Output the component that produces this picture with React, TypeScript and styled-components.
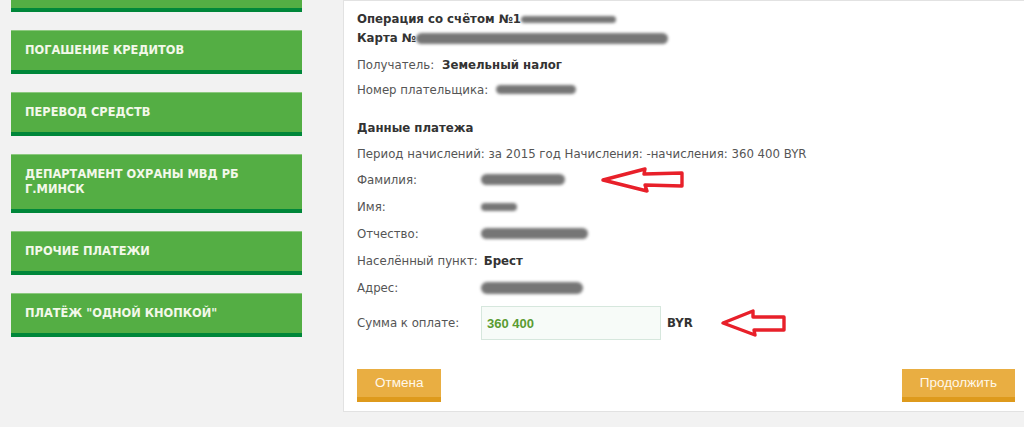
import styled, { createGlobalStyle } from "styled-components";

const GlobalStyle = createGlobalStyle`
  body {
    margin: 0;
    background: #f2f2f2;
    overflow: hidden;
    font-family: "DejaVu Sans", Verdana, sans-serif;
  }
`;

// first item is scrolled out of view, only its bottom edge shows
const menuItems = [
  "",
  "Погашение кредитов",
  "Перевод средств",
  "Департамент охраны МВД РБ г.Минск",
  "Прочие платежи",
  'Платёж "одной кнопкой"',
];

type ArrowProps = { w: number; h: number; points: string };

const Arrow = ({ w, h, points }: ArrowProps) => (
  <ArrowSvg width={w} height={h} viewBox={`0 0 ${w} ${h}`}>
    <polygon
      points={points}
      fill="none"
      stroke="#e8202a"
      strokeWidth="3.4"
      strokeLinejoin="round"
    />
  </ArrowSvg>
);

const Field = ({ label, children }: { label: string; children: React.ReactNode }) => (
  <FieldRow>
    <FieldLabel>{label}</FieldLabel>
    {children}
  </FieldRow>
);

export default function App() {
  return (
    <>
      <GlobalStyle />
      <Page>
        <Sidebar>
          {menuItems.map((item, i) => (
            <MenuButton key={i}>{item}</MenuButton>
          ))}
        </Sidebar>

        <Panel>
          <Title>
            <div>
              Операция со счётом №1<Redact $w={95} $h={7} />
            </div>
            <div>
              Карта №<Redact $w={252} $h={11} />
            </div>
          </Title>

          <InfoLine>
            <Label>Получатель:</Label>
            <Value>Земельный налог</Value>
          </InfoLine>
          <InfoLine>
            <Label>Номер плательщика:</Label>
            <Redact $w={80} $h={9} />
          </InfoLine>

          <SectionTitle>Данные платежа</SectionTitle>
          <InfoLine>
            <Label>Период начислений: за 2015 год Начисления: -начисления: 360 400 BYR</Label>
          </InfoLine>

          <Field label="Фамилия:">
            <Redact $w={84} $h={11} />
            <ArrowSlot $gap={36}>
              <Arrow w={84} h={26} points="2,13 44,2 43,7 81,6 81,19 44,18 46,24" />
            </ArrowSlot>
          </Field>
          <Field label="Имя:">
            <Redact $w={36} $h={8} />
          </Field>
          <Field label="Отчество:">
            <Redact $w={107} $h={11} />
          </Field>
          <Field label="Населённый пункт:">
            <Value>Брест</Value>
          </Field>
          <Field label="Адрес:">
            <Redact $w={102} $h={12} />
          </Field>

          <SumRow>
            <FieldLabel>Сумма к оплате:</FieldLabel>
            <AmountInput>360 400</AmountInput>
            <Currency>BYR</Currency>
            <ArrowSlot $gap={28}>
              <Arrow w={66} h={28} points="2,14 32,2 32,8 63,8 63,21 33,21 34,26" />
            </ArrowSlot>
          </SumRow>

          <Actions>
            <ActionButton>Отмена</ActionButton>
            <ActionButton>Продолжить</ActionButton>
          </Actions>
        </Panel>
      </Page>
    </>
  );
}

const Page = styled.div`
  display: flex;
  align-items: flex-start;
  gap: 41px;
  padding-left: 11px;
`;

const Sidebar = styled.nav`
  width: 291px;
  flex-shrink: 0;
  margin-top: -32px;
  display: flex;
  flex-direction: column;
  gap: 18px;
`;

const MenuButton = styled.div`
  box-sizing: border-box;
  min-height: 44px;
  padding: 12px 14px 12px;
  background: #54ae44;
  border-top: 1px solid #8cc97f;
  border-bottom: 4px solid #00873a;
  color: #f3f8ea;
  font-size: 11.4px;
  font-weight: bold;
  line-height: 15px;
  text-transform: uppercase;
`;

const Panel = styled.section`
  box-sizing: border-box;
  width: 686px;
  flex-shrink: 0;
  background: #fff;
  border: 1px solid #e2e2e2;
  padding: 9px 13px 9px;
  font-size: 11.75px;
  color: #555;
`;

const Title = styled.div`
  font-weight: bold;
  color: #333;
  line-height: 19px;
  margin-bottom: 4px;
`;

const Redact = styled.span<{ $w: number; $h: number }>`
  display: inline-block;
  width: ${(p) => p.$w}px;
  height: ${(p) => p.$h}px;
  background: #767676;
  border-radius: 999px;
  filter: blur(1.6px);
  vertical-align: middle;
`;

const InfoLine = styled.div`
  display: flex;
  align-items: center;
  gap: 8px;
  height: 25px;
`;

const Label = styled.span`
  color: #555;
  white-space: nowrap;
`;

const Value = styled.span`
  font-weight: bold;
  color: #333;
`;

const SectionTitle = styled.div`
  margin-top: 14px;
  line-height: 25px;
  font-weight: bold;
  color: #333;
`;

const FieldRow = styled.div`
  display: flex;
  align-items: center;
  height: 27px;
`;

const FieldLabel = styled.span`
  min-width: 118px;
  margin-right: 6px;
  flex-shrink: 0;
  white-space: nowrap;
  color: #555;
`;

const ArrowSlot = styled.span<{ $gap: number }>`
  display: inline-flex;
  margin-left: ${(p) => p.$gap}px;
`;

const ArrowSvg = styled.svg`
  display: block;
`;

const SumRow = styled.div`
  display: flex;
  align-items: center;
  margin-top: 5px;
  height: 34px;
`;

const AmountInput = styled.div`
  box-sizing: border-box;
  width: 180px;
  height: 34px;
  display: flex;
  align-items: center;
  padding-left: 5px;
  background: #f7fbf8;
  border: 1px solid #d6e7dd;
  color: #5a9c32;
  font-family: "Liberation Sans", Arial, sans-serif;
  font-size: 13px;
  font-weight: bold;
`;

const Currency = styled.span`
  margin-left: 6px;
  font-weight: bold;
  color: #333;
`;

const Actions = styled.div`
  display: flex;
  justify-content: space-between;
  margin-top: 29px;
`;

const ActionButton = styled.div`
  box-sizing: border-box;
  height: 33px;
  padding: 0 18px;
  background: #e9ae42;
  border-bottom: 5px solid #de9a1c;
  color: #fff8ea;
  font-family: "Liberation Sans Narrow", "Liberation Sans", Arial, sans-serif;
  font-size: 13.5px;
  line-height: 28px;
`;
